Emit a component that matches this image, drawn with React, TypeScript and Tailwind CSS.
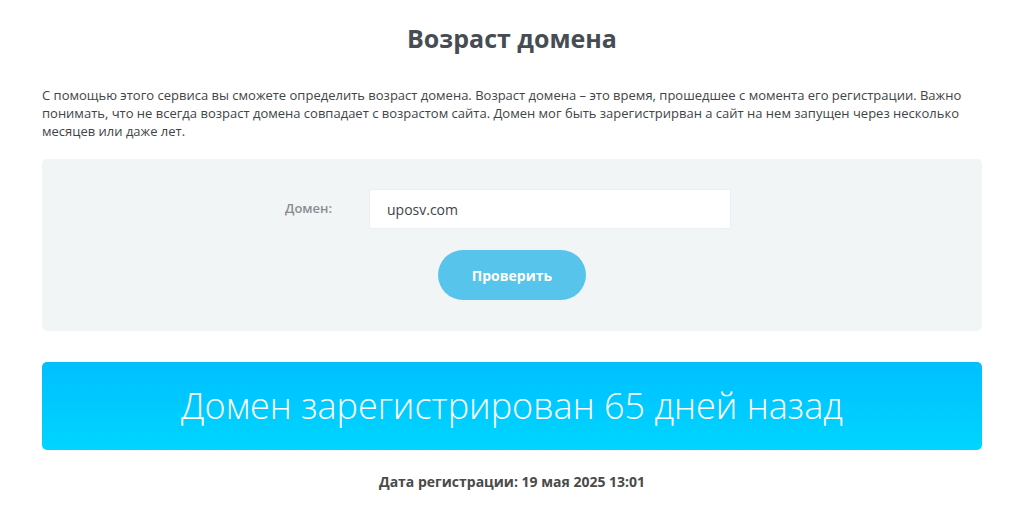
export default function App() {
  return (
    <div className="min-h-screen bg-white" style={{ fontFamily: '"Open Sans", "Noto Sans", sans-serif' }}>
      <div className="ml-[42px] w-[940px] pt-[21px]">
        <h1 className="text-center text-[25px] font-bold leading-[34px] text-[#464c53]">Возраст домена</h1>

        <p className="mt-[31px] text-[13px] leading-[18px] text-[#3f4448]">
          С помощью этого сервиса вы сможете определить возраст домена. Возраст домена – это время, прошедшее с момента его регистрации. Важно понимать, что не всегда возраст домена совпадает с возрастом сайта. Домен мог быть зарегистрирван а сайт на нем запущен через несколько месяцев или даже лет.
        </p>

        <div className="mt-[19px] flex h-[172px] flex-col items-center rounded-[5px] bg-[#f2f5f6] pt-[30px]">
          <div className="flex items-center pr-[8px]">
            <label className="mr-[34px] w-[50px] text-[13px] font-semibold text-[#8a8d90]">Домен:</label>
            <input
              className="h-[40px] w-[362px] rounded-[2px] border border-[#eceff1] bg-white px-[17px] text-[14px] text-[#3e4347] outline-none"
              defaultValue="uposv.com"
            />
          </div>
          <button className="mt-[21px] h-[50px] w-[148px] rounded-full bg-[#56c4eb] text-[14px] font-bold text-white">
            Проверить
          </button>
        </div>

        <div className="mt-[31px] flex h-[88px] items-center justify-center rounded-[5px] bg-gradient-to-b from-[#00bfff] to-[#00d5ff]">
          <span className="text-[36px] font-light text-white">Домен зарегистрирован 65 дней назад</span>
        </div>

        <p className="mt-[21px] text-center text-[14px] font-bold text-[#4a4a4a]">Дата регистрации: 19 мая 2025 13:01</p>
      </div>
    </div>
  );
}
